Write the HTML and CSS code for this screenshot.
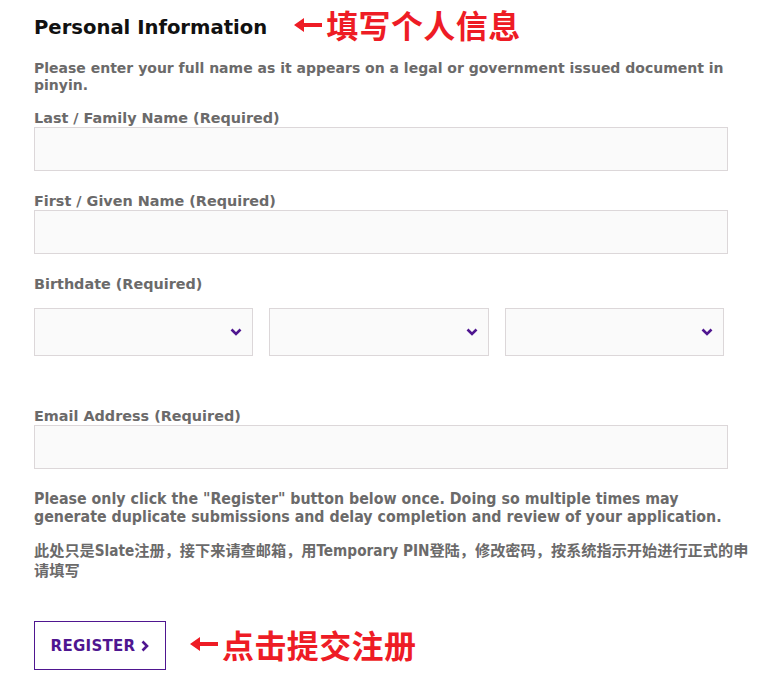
FILE: index.html
```html
<!DOCTYPE html>
<html lang="en">
<head>
<meta charset="utf-8">
<link rel="stylesheet" href="styles.css">
</head>
<body>
<main class="form">
  <div class="title-row">
    <h2 class="title">Personal Information</h2>
    <span class="note note-top"><svg class="arrow" width="28" height="16" viewBox="0 0 28 16"><path d="M0 8 L10 1 L10 6 L28 6 L28 10 L10 10 L10 15 Z" fill="#ee1c25"/></svg>填写个人信息</span>
  </div>
  <p class="intro">Please enter your full name as it appears on a legal or government issued document in pinyin.</p>

  <div class="field">
    <label class="label">Last / Family Name (Required)</label>
    <div class="input"></div>
  </div>
  <div class="field">
    <label class="label">First / Given Name (Required)</label>
    <div class="input"></div>
  </div>
  <div class="field field-date">
    <label class="label">Birthdate (Required)</label>
    <div class="selects">
      <div class="select"><svg class="chev" width="12" height="8" viewBox="0 0 12 8"><path d="M1.5 1.5 L6 6 L10.5 1.5" fill="none" stroke="#4f1690" stroke-width="2.6"/></svg></div>
      <div class="select"><svg class="chev" width="12" height="8" viewBox="0 0 12 8"><path d="M1.5 1.5 L6 6 L10.5 1.5" fill="none" stroke="#4f1690" stroke-width="2.6"/></svg></div>
      <div class="select"><svg class="chev" width="12" height="8" viewBox="0 0 12 8"><path d="M1.5 1.5 L6 6 L10.5 1.5" fill="none" stroke="#4f1690" stroke-width="2.6"/></svg></div>
    </div>
  </div>
  <div class="field field-email">
    <label class="label">Email Address (Required)</label>
    <div class="input"></div>
  </div>

  <p class="warn">Please only click the "Register" button below once. Doing so multiple times may generate duplicate submissions and delay completion and review of your application.</p>
  <p class="cn">此处只是Slate注册，接下来请查邮箱，用Temporary PIN登陆，修改密码，按系统指示开始进行正式的申请填写</p>

  <div class="btn-row">
    <button class="btn">REGISTER <svg class="btn-chev" width="8" height="12" viewBox="0 0 8 12"><path d="M1.5 1.5 L6 6 L1.5 10.5" fill="none" stroke="#4f1690" stroke-width="2.6"/></svg></button>
    <span class="note note-btn"><svg class="arrow" width="28" height="16" viewBox="0 0 28 16"><path d="M0 8 L10 1 L10 6 L28 6 L28 10 L10 10 L10 15 Z" fill="#ee1c25"/></svg>点击提交注册</span>
  </div>
</main>
</body>
</html>
```

FILE: styles.css
```css
html, body {
  margin: 0;
  padding: 0;
  background: #ffffff;
}
body {
  font-family: "DejaVu Sans", "Noto Sans CJK SC", sans-serif;
}
.form {
  padding: 11px 34px 0 34px;
  width: 694px;
}
.title-row {
  display: flex;
  align-items: center;
  gap: 27px;
  height: 32px;
}
.title {
  margin: 0;
  font-size: 19.6px;
  font-weight: bold;
  color: #111111;
}
.note {
  display: flex;
  align-items: center;
  gap: 4px;
  font-family: "Noto Sans CJK SC", sans-serif;
  font-weight: bold;
  color: #ee1c25;
  font-size: 32px;
  line-height: 36px;
  letter-spacing: 0.4px;
}
.arrow {
  display: block;
  flex: none;
  margin-top: 1px;
}
.note-top {
  margin-bottom: 6px;
}
.note-btn {
  margin-bottom: 4px;
}
.intro {
  margin: 17px 0 0 0;
  width: 704px;
  font-size: 14px;
  line-height: 17px;
  font-weight: bold;
  color: #6b6a6a;
}
.field {
  margin-top: 15px;
}
.field + .field {
  margin-top: 21px;
}
.label {
  display: block;
  font-size: 14.4px;
  line-height: 18px;
  font-weight: bold;
  color: #6b6a6a;
  margin-bottom: 0;
}
.input {
  height: 42px;
  border: 1px solid #dcd7d9;
  background: #fafafa;
}
.field-date .label {
  margin-bottom: 15px;
}
.selects {
  display: flex;
  gap: 16px;
  width: 690px;
}
.select {
  flex: 1;
  height: 46px;
  border: 1px solid #dcd7d9;
  background: #fafafa;
  display: flex;
  align-items: center;
  justify-content: flex-end;
  padding-right: 10px;
}
.chev {
  display: block;
}
.field.field-email {
  margin-top: 51px;
}
.warn {
  margin: 21px 0 0 0;
  font-family: "DejaVu Sans Condensed", "DejaVu Sans", sans-serif;
  font-stretch: condensed;
  font-size: 15.8px;
  line-height: 18px;
  font-weight: bold;
  color: #6b6a6a;
}
.cn {
  margin: 15px 0 0 0;
  width: 720px;
  font-family: "DejaVu Sans Condensed", "Noto Sans CJK SC", sans-serif;
  font-stretch: condensed;
  font-size: 15.2px;
  line-height: 20px;
  font-weight: bold;
  color: #6b6a6a;
}
.btn-row {
  margin-top: 40px;
  display: flex;
  align-items: center;
  gap: 24px;
}
.btn {
  width: 132px;
  height: 49px;
  border: 1.5px solid #4f1690;
  background: #ffffff;
  color: #4f1690;
  font-family: "DejaVu Sans", sans-serif;
  font-weight: bold;
  font-size: 15px;
  letter-spacing: 0.3px;
  display: flex;
  align-items: center;
  justify-content: center;
  gap: 6px;
  padding: 0;
}
.btn-chev {
  display: block;
}
```
